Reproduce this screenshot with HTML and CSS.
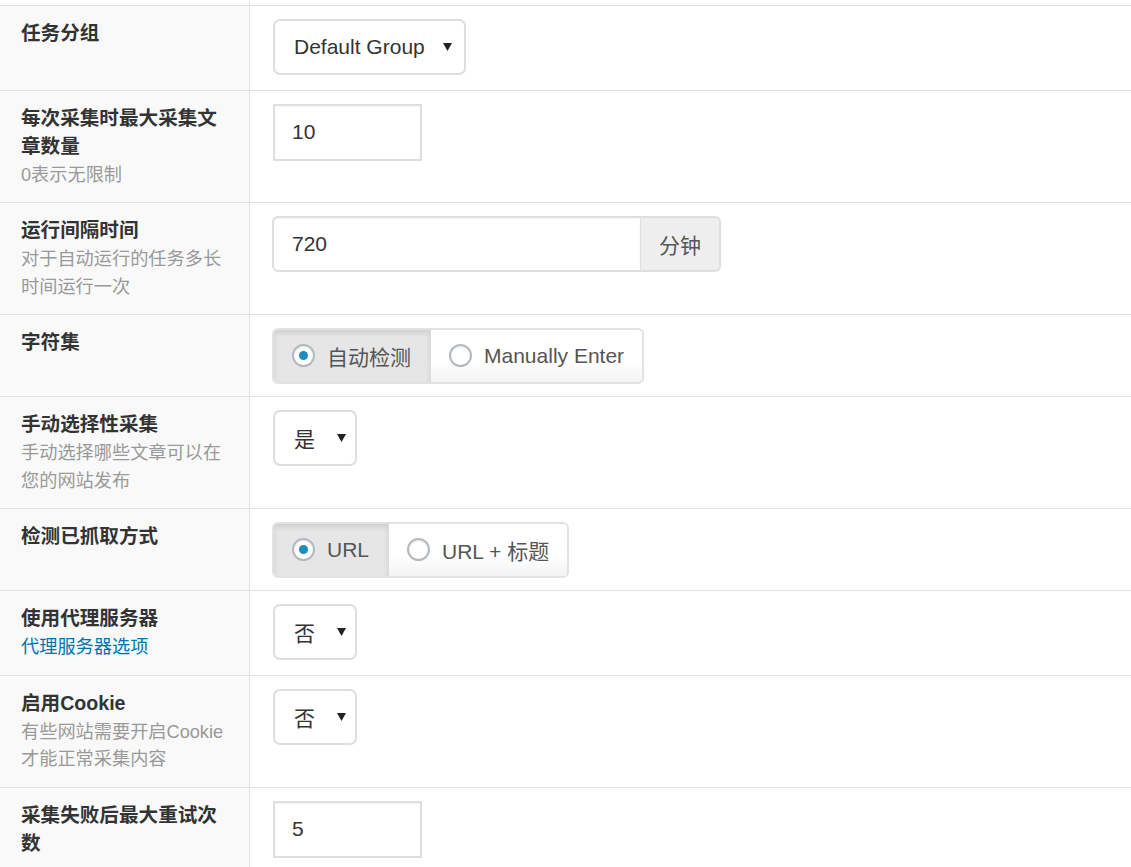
FILE: index.html
```html
<!DOCTYPE html>
<html lang="zh-CN">
<head>
<meta charset="utf-8">
<title>任务设置</title>
<link rel="stylesheet" href="styles.css">
</head>
<body>
<table class="form-table">
  <tbody>
    <tr class="spacer"><th></th><td></td></tr>
    <tr>
      <th><div class="label">任务分组</div></th>
      <td>
        <div class="select select-wide"><span>Default Group</span><svg class="caret" width="9" height="8" viewBox="0 0 9 8"><polygon points="0,0 9,0 4.5,8" fill="#222"/></svg></div>
      </td>
    </tr>
    <tr>
      <th><div class="label">每次采集时最大采集文章数量</div><div class="desc">0表示无限制</div></th>
      <td><div class="input input-small">10</div></td>
    </tr>
    <tr>
      <th><div class="label">运行间隔时间</div><div class="desc">对于自动运行的任务多长时间运行一次</div></th>
      <td>
        <div class="input-group"><div class="input input-grow">720</div><div class="addon">分钟</div></div>
      </td>
    </tr>
    <tr>
      <th><div class="label">字符集</div></th>
      <td class="radio-cell">
        <div class="btn-group">
          <div class="btn active"><span class="radio checked"></span><span>自动检测</span></div>
          <div class="btn"><span class="radio"></span><span>Manually Enter</span></div>
        </div>
      </td>
    </tr>
    <tr>
      <th><div class="label">手动选择性采集</div><div class="desc">手动选择哪些文章可以在您的网站发布</div></th>
      <td>
        <div class="select select-small"><span>是</span><svg class="caret" width="9" height="8" viewBox="0 0 9 8"><polygon points="0,0 9,0 4.5,8" fill="#222"/></svg></div>
      </td>
    </tr>
    <tr>
      <th><div class="label">检测已抓取方式</div></th>
      <td class="radio-cell">
        <div class="btn-group">
          <div class="btn active"><span class="radio checked"></span><span>URL</span></div>
          <div class="btn"><span class="radio"></span><span>URL + 标题</span></div>
        </div>
      </td>
    </tr>
    <tr>
      <th><div class="label">使用代理服务器</div><div class="desc"><a class="link" href="#">代理服务器选项</a></div></th>
      <td>
        <div class="select select-small"><span>否</span><svg class="caret" width="9" height="8" viewBox="0 0 9 8"><polygon points="0,0 9,0 4.5,8" fill="#222"/></svg></div>
      </td>
    </tr>
    <tr>
      <th><div class="label">启用Cookie</div><div class="desc">有些网站需要开启Cookie才能正常采集内容</div></th>
      <td>
        <div class="select select-small"><span>否</span><svg class="caret" width="9" height="8" viewBox="0 0 9 8"><polygon points="0,0 9,0 4.5,8" fill="#222"/></svg></div>
      </td>
    </tr>
    <tr>
      <th><div class="label">采集失败后最大重试次数</div></th>
      <td><div class="input input-small">5</div></td>
    </tr>
  </tbody>
</table>
</body>
</html>
```
FILE: styles.css
```css
html, body {
  margin: 0;
  padding: 0;
  background: #fff;
  overflow: hidden;
}
body {
  font-family: "Liberation Sans", "Noto Sans CJK SC", sans-serif;
  color: #333;
}
.form-table {
  width: 100%;
  border-collapse: separate;
  border-spacing: 0;
}
.form-table th,
.form-table td {
  border-bottom: 1px solid #e1e1e1;
  vertical-align: top;
}
.form-table th {
  width: 204px;
  padding: 13px 24px 13px 21px;
  background: #f9f9f9;
  border-right: 1px solid #e1e1e1;
  text-align: left;
  font-weight: normal;
}
.form-table td {
  padding: 13px 23px 14.5px 22px;
}
.form-table td.radio-cell {
  padding-top: 12.5px;
  padding-bottom: 12.5px;
}
.form-table tr.spacer th,
.form-table tr.spacer td {
  height: 5px;
  padding: 0;
  background: #fff;
}
.label {
  font-size: 19.6px;
  line-height: 28px;
  font-weight: bold;
  color: #333;
}
.desc {
  margin-top: 2px;
  font-size: 18.2px;
  line-height: 27.5px;
  color: #999;
}
.link {
  color: #0073aa;
  text-decoration: none;
}
.select {
  box-sizing: border-box;
  height: 56px;
  margin-left: 1px;
  display: flex;
  align-items: center;
  justify-content: space-between;
  padding: 0 12px 0 19px;
  border: 2px solid #dedede;
  border-radius: 7px;
  background: #fff;
  font-size: 21px;
  color: #333;
}
.select-wide {
  width: 193px;
}
.select-small {
  width: 84px;
  padding-right: 9px;
}
.caret {
  display: block;
  flex: none;
}
.input {
  box-sizing: border-box;
  height: 57px;
  display: flex;
  align-items: center;
  padding: 0 17px;
  border: 2px solid #dedede;
  background: #fff;
  box-shadow: inset 0 1px 2px rgba(0, 0, 0, 0.05);
  font-size: 21px;
  color: #333;
}
.input-small {
  width: 149px;
  margin-left: 1px;
}
.input-group {
  display: flex;
  width: 449px;
  height: 56px;
}
.input-group .input {
  height: 56px;
  flex: 1;
  padding-left: 18px;
  border-radius: 6px 0 0 6px;
  border-right: 1px solid #dedede;
}
.addon {
  box-sizing: border-box;
  width: 80px;
  display: flex;
  align-items: center;
  justify-content: center;
  background: #eee;
  border: 2px solid #dedede;
  border-left: none;
  border-radius: 0 6px 6px 0;
  font-size: 21px;
  color: #555;
}
.btn-group {
  display: inline-flex;
  height: 56px;
  box-sizing: border-box;
  border: 2px solid #e2e2e2;
  border-radius: 6px;
  overflow: hidden;
}
.btn {
  display: flex;
  align-items: center;
  gap: 12px;
  padding: 0 18px 0 18px;
  background: linear-gradient(#fff 60%, #f3f3f3);
  font-size: 21px;
  color: #555;
}
.btn + .btn {
  border-left: 1px solid #dadada;
}
.btn.active {
  padding-right: 19px;
  background: #e6e6e6;
  box-shadow: inset 0 3px 5px rgba(0, 0, 0, 0.1);
}
.radio {
  box-sizing: border-box;
  width: 23px;
  height: 23px;
  border: 2px solid #b4b9be;
  border-radius: 50%;
  background: #fff;
  box-shadow: inset 0 1px 2px rgba(0, 0, 0, 0.1);
  display: flex;
  align-items: center;
  justify-content: center;
  flex: none;
}
.radio.checked::before {
  content: "";
  width: 9px;
  height: 9px;
  border-radius: 50%;
  background: #1e8cbe;
}
```
